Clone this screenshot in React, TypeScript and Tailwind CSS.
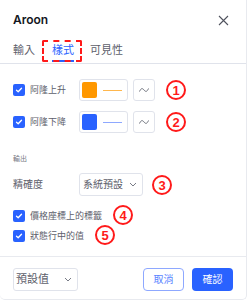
import React from "react";

const FONT = { fontFamily: '"Noto Sans", "Noto Sans CJK TC", sans-serif' };

function Check() {
  return (
    <div className="w-[12px] h-[12px] rounded-[2px] bg-[#2962ff] flex items-center justify-center shrink-0">
      <svg width="8" height="8" viewBox="0 0 8 8">
        <path d="M1.5 4.2 L3.2 5.8 L6.5 2.2" stroke="white" strokeWidth="1.3" fill="none" strokeLinecap="round" strokeLinejoin="round" />
      </svg>
    </div>
  );
}

function Chevron() {
  return (
    <svg width="8" height="5" viewBox="0 0 8 5">
      <path d="M1 1 L4 4 L7 1" stroke="#787b86" strokeWidth="1" fill="none" />
    </svg>
  );
}

function Badge({ n, className }: { n: string; className: string }) {
  return (
    <div
      className={`absolute w-[20px] h-[20px] rounded-full border-[2px] border-[#ff1a1a] flex items-center justify-center text-[#ff1a1a] text-[13px] font-bold leading-none ${className}`}
      style={{ fontFamily: '"Liberation Sans", Arial, sans-serif' }}
    >
      {n}
    </div>
  );
}

function ColorRow({ label, swatch, line }: { label: string; swatch: string; line: string }) {
  return (
    <div className="flex items-center h-[22px]">
      <div className="w-[17px]">
        <Check />
      </div>
      <span className="text-[9px] text-[#5d606b] w-[49px]">{label}</span>
      <div className="w-[49px] h-[22px] border border-[#e0e3eb] rounded-[3px] flex items-center pl-[2px]">
        <div className={`w-[15px] h-[16px] rounded-[2px] ${swatch}`} />
        <div className={`ml-[6px] w-[19px] h-[1px] ${line}`} />
      </div>
      <div className="ml-[5px] w-[22px] h-[22px] border border-[#e0e3eb] rounded-[3px] flex items-center justify-center">
        <svg width="10" height="6" viewBox="0 0 10 6">
          <path d="M0.5 4.5 C2 1, 3.5 1, 5 3 S8 5, 9.5 1.5" stroke="#6a6d78" strokeWidth="1" fill="none" />
        </svg>
      </div>
    </div>
  );
}

export default function App() {
  return (
    <div
      className="relative w-[247px] h-[300px] bg-white border-r border-b border-[#e8eaef] rounded-br-[5px] rounded-bl-[5px] overflow-hidden"
      style={FONT}
    >
      {/* header */}
      <div className="h-[40px] flex items-center justify-between pl-[13px] pr-[17px]">
        <span className="text-[12px] font-semibold text-[#131722]" style={{ fontFamily: 'Inter, "Noto Sans", sans-serif' }}>
          Aroon
        </span>
        <svg width="11" height="11" viewBox="0 0 11 11">
          <path d="M1 1 L10 10 M10 1 L1 10" stroke="#50535e" strokeWidth="1.1" />
        </svg>
      </div>
      {/* tabs */}
      <div className="relative h-[24px] border-b border-[#e0e3eb] flex items-start pl-[13px] text-[11px] leading-[20px]">
        <span className="text-[#5d606b]">輸入</span>
        <span className="relative ml-[17px] text-[#2962ff]">
          樣式
          <span className="absolute left-0 right-0 top-[20px] h-[2px] bg-[#2962ff]" />
        </span>
        <span className="ml-[16px] text-[#5d606b]">可見性</span>
        <div className="absolute left-[42px] top-0 w-[40px] h-[22px] border-[2px] border-dashed border-[#ff1a1a] rounded-[2px]" />
      </div>
      {/* body */}
      <div className="pl-[13px] pt-[15px] flex flex-col gap-[10px]">
        <ColorRow label="阿隆上升" swatch="bg-[#ff9800]" line="bg-[#ffb74d]" />
        <ColorRow label="阿隆下降" swatch="bg-[#2962ff]" line="bg-[#8ea8ff]" />
      </div>
      <div className="pl-[13px] mt-[20px] text-[7px] text-[#787b86] leading-[12px]">輸出</div>
      <div className="pl-[13px] mt-[8px] flex items-center h-[23px]">
        <span className="w-[66px] text-[10px] text-[#5d606b]">精確度</span>
        <div className="w-[64px] h-[23px] border border-[#e0e3eb] rounded-[3px] flex items-center justify-between pl-[3px] pr-[5px]">
          <span className="text-[10px] text-[#5d606b]">系統預設</span>
          <Chevron />
        </div>
      </div>
      <div className="pl-[13px] mt-[13px] flex items-center h-[13px]">
        <div className="w-[17px]"><Check /></div>
        <span className="text-[9px] text-[#5d606b]">價格座標上的標籤</span>
      </div>
      <div className="pl-[13px] mt-[7px] flex items-center h-[13px]">
        <div className="w-[17px]"><Check /></div>
        <span className="text-[9px] text-[#5d606b]">狀態行中的值</span>
      </div>
      {/* footer */}
      <div className="absolute left-0 right-0 top-[256px] border-t border-[#e8eaef] h-[44px] flex items-start pt-[11px] px-[13px]">
        <div className="w-[65px] h-[23px] border border-[#e0e3eb] rounded-[3px] flex items-center justify-between pl-[2px] pr-[5px]">
          <span className="text-[11px] text-[#5d606b]">預設值</span>
          <Chevron />
        </div>
        <div className="ml-auto flex gap-[8px]">
          <div className="w-[41px] h-[23px] border border-[#8ea8ff] rounded-[4px] flex items-center justify-center text-[10px] text-[#5c85ff]">
            取消
          </div>
          <div className="w-[41px] h-[23px] bg-[#2962ff] rounded-[4px] flex items-center justify-center text-[10px] text-white">
            確認
          </div>
        </div>
      </div>
      <Badge n="1" className="left-[166px] top-[80px]" />
      <Badge n="2" className="left-[166px] top-[112px]" />
      <Badge n="3" className="left-[152px] top-[175px]" />
      <Badge n="4" className="left-[113px] top-[205px]" />
      <Badge n="5" className="left-[95px] top-[225px]" />
    </div>
  );
}
